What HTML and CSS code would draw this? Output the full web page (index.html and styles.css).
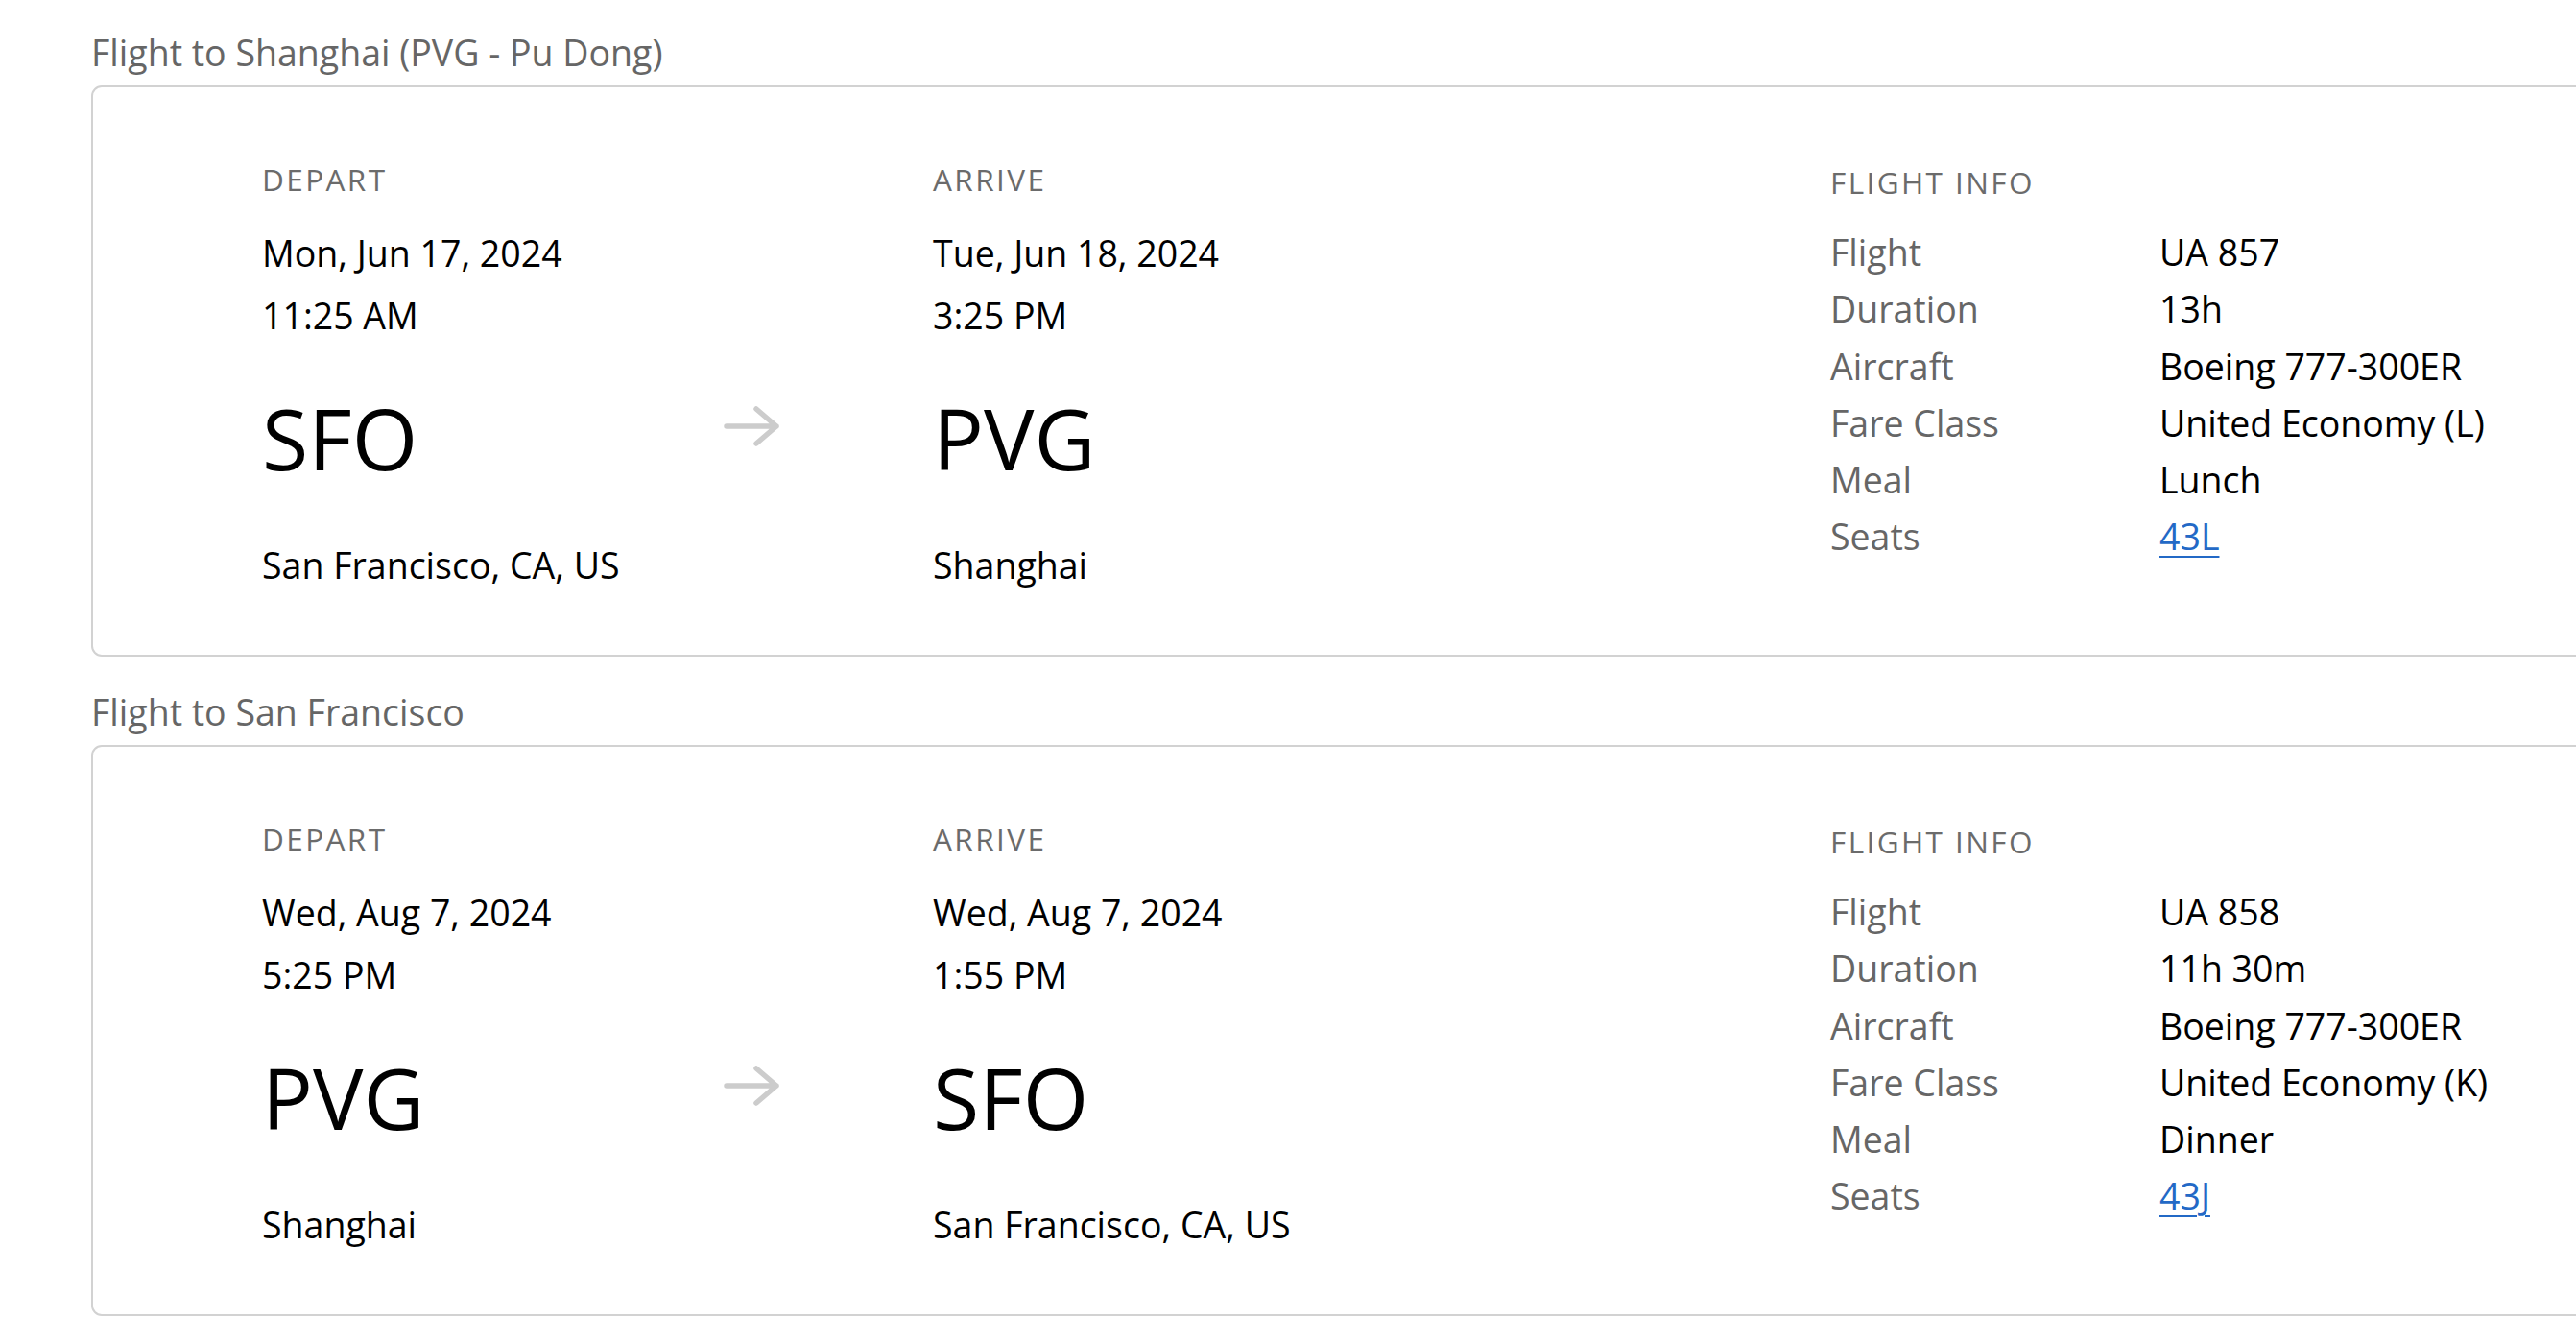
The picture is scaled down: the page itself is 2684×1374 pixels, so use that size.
FILE: index.html
```html
<!DOCTYPE html>
<html lang="en">
<head>
<meta charset="utf-8">
<title>Flights</title>
<link rel="stylesheet" href="styles.css">
</head>
<body>
<main class="trip">
  <section class="leg">
    <h2 class="leg-title">Flight to Shanghai (PVG - Pu Dong)</h2>
    <div class="card">
      <div class="col depart">
        <div class="label">DEPART</div>
        <div class="date">Mon, Jun 17, 2024</div>
        <div class="time">11:25 AM</div>
        <div class="code">SFO</div>
        <div class="city">San Francisco, CA, US</div>
      </div>
      <div class="col arrow">
        <svg class="arrow-icon" width="62" height="46" viewBox="0 0 62 46" aria-hidden="true">
          <path d="M5 23 H57 M36 5 L57 23 L36 41" fill="none" stroke="#cccccc" stroke-width="5.5" stroke-linecap="round" stroke-linejoin="round"/>
        </svg>
      </div>
      <div class="col arrive">
        <div class="label">ARRIVE</div>
        <div class="date">Tue, Jun 18, 2024</div>
        <div class="time">3:25 PM</div>
        <div class="code">PVG</div>
        <div class="city">Shanghai</div>
      </div>
      <div class="col info">
        <div class="label info-label">FLIGHT INFO</div>
        <dl class="info-list">
          <dt>Flight</dt><dd>UA 857</dd>
          <dt>Duration</dt><dd>13h</dd>
          <dt>Aircraft</dt><dd>Boeing 777-300ER</dd>
          <dt>Fare Class</dt><dd>United Economy (L)</dd>
          <dt>Meal</dt><dd>Lunch</dd>
          <dt>Seats</dt><dd><a class="seat" href="#">43L</a></dd>
        </dl>
      </div>
    </div>
  </section>

  <section class="leg">
    <h2 class="leg-title">Flight to San Francisco</h2>
    <div class="card">
      <div class="col depart">
        <div class="label">DEPART</div>
        <div class="date">Wed, Aug 7, 2024</div>
        <div class="time">5:25 PM</div>
        <div class="code">PVG</div>
        <div class="city">Shanghai</div>
      </div>
      <div class="col arrow">
        <svg class="arrow-icon" width="62" height="46" viewBox="0 0 62 46" aria-hidden="true">
          <path d="M5 23 H57 M36 5 L57 23 L36 41" fill="none" stroke="#cccccc" stroke-width="5.5" stroke-linecap="round" stroke-linejoin="round"/>
        </svg>
      </div>
      <div class="col arrive">
        <div class="label">ARRIVE</div>
        <div class="date">Wed, Aug 7, 2024</div>
        <div class="time">1:55 PM</div>
        <div class="code">SFO</div>
        <div class="city">San Francisco, CA, US</div>
      </div>
      <div class="col info">
        <div class="label info-label">FLIGHT INFO</div>
        <dl class="info-list">
          <dt>Flight</dt><dd>UA 858</dd>
          <dt>Duration</dt><dd>11h 30m</dd>
          <dt>Aircraft</dt><dd>Boeing 777-300ER</dd>
          <dt>Fare Class</dt><dd>United Economy (K)</dd>
          <dt>Meal</dt><dd>Dinner</dd>
          <dt>Seats</dt><dd><a class="seat" href="#">43J</a></dd>
        </dl>
      </div>
    </div>
  </section>
</main>
</body>
</html>
```

FILE: styles.css
```css
html {
  overflow: hidden;
  background: #ffffff;
}

body {
  margin: 0;
  font-family: "Open Sans", "Noto Sans", "Liberation Sans", sans-serif;
  color: #000000;
  background: #ffffff;
}

.trip {
  padding: 31px 0 0 95px;
}

.leg {
  margin-bottom: 34px;
}

.leg-title {
  margin: 0 0 10px 0;
  font-size: 37.5px;
  line-height: 48px;
  font-weight: 400;
  color: #666666;
}

.card {
  box-sizing: border-box;
  width: 2640px;
  border: 2px solid #d2d2d2;
  border-radius: 11px;
  padding: 76px 0 61px 176px;
  display: grid;
  grid-template-columns: 479px 220px 935px 1fr;
  align-items: start;
}

.label {
  font-size: 31.5px;
  line-height: 40px;
  letter-spacing: 2.4px;
  color: #6b6b6b;
}

.date,
.time,
.city {
  font-size: 37.5px;
  line-height: 65px;
}

.date {
  margin-top: 24px;
}

.code {
  margin-top: 45px;
  font-size: 88px;
  line-height: 100px;
}

.city {
  margin-top: 50px;
}

.arrow {
  padding-top: 254px;
}

.arrow-icon {
  display: block;
}

.info-label {
  padding-top: 3px;
}

.info-list {
  margin: 23px 0 0 0;
  display: grid;
  grid-template-columns: 343px 1fr;
  font-size: 37.5px;
  line-height: 59.3px;
}

.info-list dt {
  color: #666666;
}

.info-list dd {
  margin: 0;
  color: #000000;
}

.seat {
  color: #2369c6;
  text-decoration: underline;
  text-underline-offset: 6px;
  text-decoration-thickness: 2px;
}
```
